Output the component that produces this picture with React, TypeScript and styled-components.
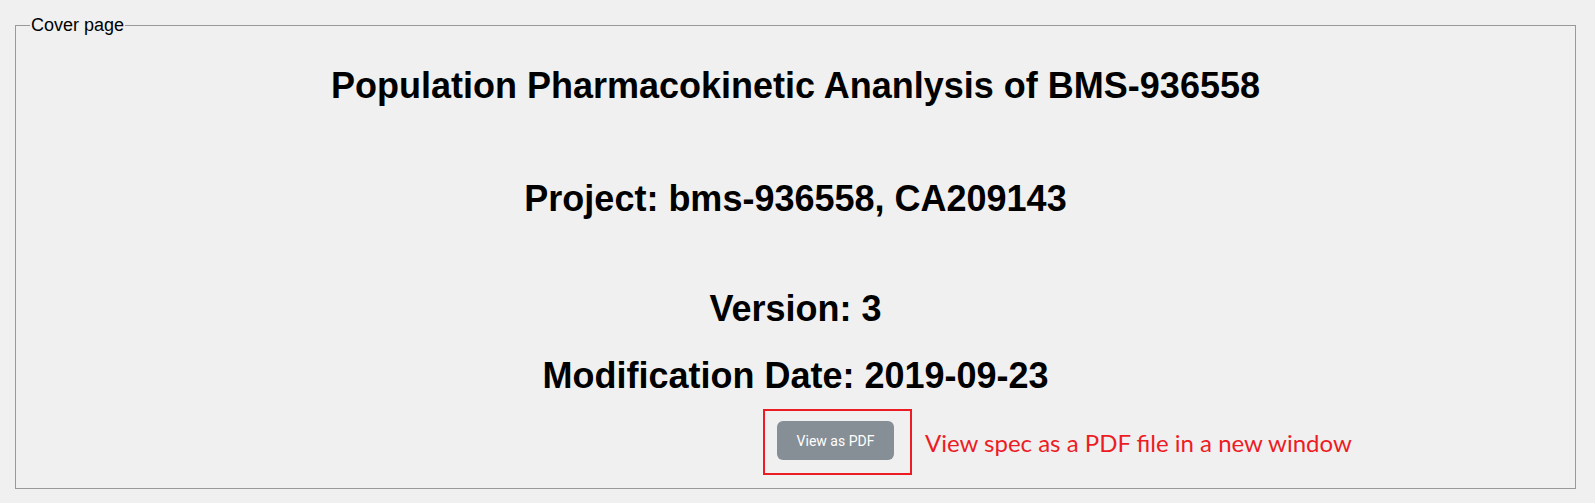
import React from "react";
import styled, { createGlobalStyle } from "styled-components";

const GlobalStyle = createGlobalStyle`
  html, body {
    margin: 0;
    padding: 0;
    background: #f0f0f0;
  }
  body {
    font-family: "Liberation Sans", Arial, sans-serif;
    color: #000;
  }
`;

const Page = styled.div`
  padding: 15px 19px 13px 15px;
  background: #f0f0f0;
`;

const Fieldset = styled.fieldset`
  margin: 0;
  min-width: 0;
  border: 1px solid #999999;
  padding: 0 14px 13px 14px;
`;

const Legend = styled.legend`
  padding: 0 1px;
  font-family: "Liberation Sans", Arial, sans-serif;
  font-size: 18px;
  line-height: 21px;
  color: #000;
`;

const Content = styled.div`
  display: flex;
  flex-direction: column;
  align-items: center;
`;

const Heading = styled.h1<{ $top: number }>`
  margin: ${(p) => p.$top}px 0 0 0;
  font-family: "Liberation Sans", Arial, sans-serif;
  font-size: 36px;
  line-height: 41px;
  font-weight: bold;
  color: #000;
  white-space: nowrap;
`;

const ActionRow = styled.div`
  align-self: stretch;
  display: flex;
  align-items: center;
  margin-top: 13px;
  padding-left: 733px;
`;

const Highlight = styled.div`
  display: flex;
  border: 2px solid #ed1c24;
  padding: 10px 16px 13px 12px;
`;

const PdfButton = styled.button`
  width: 117px;
  height: 39px;
  border: none;
  border-radius: 6px;
  background: #868e96;
  color: #ffffff;
  font-family: Roboto, "Liberation Sans", Arial, sans-serif;
  font-size: 14px;
  padding: 0;
  cursor: pointer;
`;

const Note = styled.span`
  margin-left: 13px;
  font-family: Lato, "Open Sans", sans-serif;
  font-size: 24px;
  color: #ed1c24;
  white-space: nowrap;
`;

export default function App() {
  return (
    <>
      <GlobalStyle />
      <Page>
        <Fieldset>
          <Legend>Cover page</Legend>
          <Content>
            <Heading $top={29}>Population Pharmacokinetic Ananlysis of BMS-936558</Heading>
            <Heading $top={72}>Project: bms-936558, CA209143</Heading>
            <Heading $top={69}>Version: 3</Heading>
            <Heading $top={26}>Modification Date: 2019-09-23</Heading>
            <ActionRow>
              <Highlight>
                <PdfButton type="button">View as PDF</PdfButton>
              </Highlight>
              <Note>View spec as a PDF file in a new window</Note>
            </ActionRow>
          </Content>
        </Fieldset>
      </Page>
    </>
  );
}
